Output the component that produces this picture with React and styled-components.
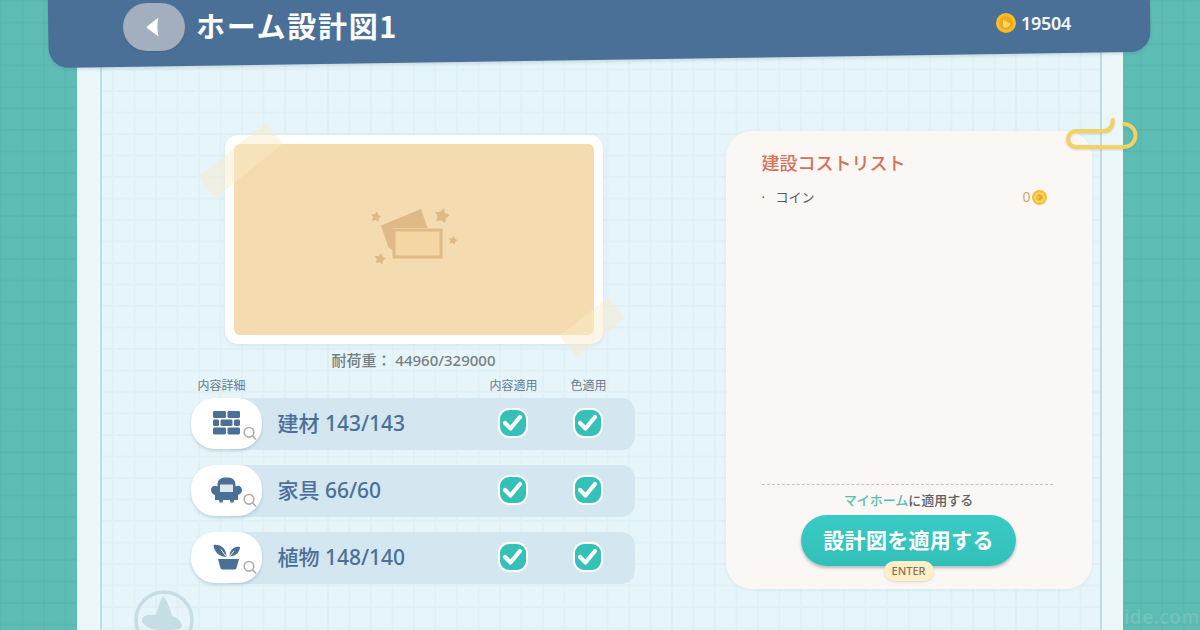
import React from "react";
import styled, { createGlobalStyle } from "styled-components";

const Global = createGlobalStyle`
  html, body { margin: 0; padding: 0; }
  body { font-family: "Noto Sans", "Noto Sans CJK JP", sans-serif; }
`;

const JP = `"Noto Sans", "Noto Sans CJK JP", sans-serif`;

const Root = styled.div`
  position: relative;
  width: 1200px;
  height: 630px;
  overflow: hidden;
  display: flex;
  flex-direction: column;
  font-family: ${JP};
  background-color: #5dbcb4;
  background-image:
    linear-gradient(to right, rgba(80, 172, 162, 0.28) 2px, transparent 2px),
    linear-gradient(to bottom, rgba(80, 172, 162, 0.28) 2px, transparent 2px);
  background-size: 21.5px 21.5px;
`;

const Header = styled.header`
  position: relative;
  z-index: 3;
  flex: none;
  display: flex;
  align-items: center;
  width: 1102px;
  height: 54px;
  margin-left: 48px;
  padding-left: 75px;
  box-sizing: border-box;
  &::before {
    content: "";
    position: absolute;
    left: 0;
    top: -40px;
    width: 100%;
    height: 100px;
    border-radius: 0 0 20px 20px;
    background: #4a7097;
    transform: rotate(-0.85deg);
    box-shadow: 0 2px 3px rgba(70, 110, 130, 0.18);
  }
`;

const BackButton = styled.button`
  position: relative;
  width: 62px;
  height: 48px;
  border: none;
  padding: 0;
  border-radius: 24px;
  background: #a3aebf;
  display: flex;
  align-items: center;
  justify-content: center;
  box-shadow: 0 1px 1px rgba(50, 80, 110, 0.35);
`;

const Title = styled.h1`
  position: relative;
  margin: -4px 0 0 11px;
  color: #fff;
  font-size: 29px;
  line-height: 1;
  font-weight: 700;
  letter-spacing: 1.7px;
  font-family: "Noto Sans CJK JP", sans-serif;
`;

const Wallet = styled.div`
  position: relative;
  margin-left: auto;
  margin-right: 79px;
  margin-top: -8px;
  display: flex;
  align-items: center;
  gap: 5px;
  color: #f3f6fa;
  font-size: 18px;
  font-weight: 600;
  letter-spacing: -0.3px;
`;

const Paper = styled.main`
  position: relative;
  flex: none;
  box-sizing: border-box;
  width: 1046px;
  height: 630px;
  margin: -54px 0 0 77px;
  padding: 0 21px 0 23px;
  background: #ecf7fa;
`;

const Sheet = styled.div`
  box-sizing: border-box;
  height: 100%;
  border-left: 2.5px solid #bcdde5;
  border-right: 2.5px solid #bcdde5;
  background-color: #e5f5fa;
  background-image:
    linear-gradient(to right, #e0f0f5 2px, transparent 2px),
    linear-gradient(to bottom, #e0f0f5 2px, transparent 2px);
  background-size: 21.5px 21.5px;
  background-position: 10px 4px;
  padding: 131px 0 0 88.5px;
  display: flex;
  align-items: flex-start;
  gap: 91px;
`;

const LeftColumn = styled.section`
  width: 444px;
  display: flex;
  flex-direction: column;
`;

const ThumbWrap = styled.div`
  position: relative;
  width: 378px;
  height: 209px;
  margin: 4px 0 0 34px;
`;

const ThumbFrame = styled.div`
  box-sizing: border-box;
  width: 100%;
  height: 100%;
  padding: 9px;
  border-radius: 13px;
  background: #fff;
  box-shadow: 0 1px 4px rgba(120, 170, 190, 0.2);
`;

const ThumbInner = styled.div`
  height: 100%;
  border-radius: 6px;
  background: #f5dcb0;
  display: flex;
  align-items: center;
  justify-content: center;
`;

const Tape = styled.div`
  position: absolute;
  left: ${(p) => p.$x}px;
  top: ${(p) => p.$y}px;
  width: ${(p) => p.$w}px;
  height: 27px;
  transform: rotate(-39deg);
  background: rgba(251, 236, 200, 0.45);
`;

const LoadText = styled.div`
  margin: 6px 0 0 34px;
  width: 378px;
  text-align: center;
  color: #777e82;
  font-size: 15px;
  line-height: 20px;
  font-weight: 500;
`;

const TableHead = styled.div`
  display: flex;
  height: 18px;
  margin-top: 6px;
  align-items: center;
  color: #68798f;
  font-size: 12px;
`;

const HeadDetail = styled.span`
  margin-left: 7px;
  width: 292px;
`;

const HeadCol = styled.span`
  width: ${(p) => p.$w}px;
`;

const Rows = styled.div`
  display: flex;
  flex-direction: column;
  gap: 15.5px;
  margin-top: 4px;
`;

const Row = styled.div`
  position: relative;
  display: flex;
  align-items: center;
  height: 51.5px;
  &::before {
    content: "";
    position: absolute;
    left: 39px;
    right: 0;
    top: 0;
    bottom: 0;
    background: #d4e6ef;
    border-radius: 0 14px 14px 0;
  }
`;

const IconPill = styled.div`
  position: relative;
  box-sizing: border-box;
  flex: none;
  width: 71px;
  height: 51px;
  border-radius: 24px;
  background: #fff;
  box-shadow: 0 2px 3px rgba(110, 140, 165, 0.3);
  display: flex;
  align-items: center;
  justify-content: center;
`;

const RowLabel = styled.span`
  position: relative;
  margin-left: 16px;
  width: 220px;
  padding-bottom: 4px;
  color: #4a7097;
  font-size: 21px;
  font-weight: 500;
  white-space: nowrap;
`;

const Check = styled.span`
  position: relative;
  box-sizing: border-box;
  flex: none;
  width: 30px;
  height: 30px;
  margin-top: -2px;
  border-radius: 11px;
  border: 2px solid #fff;
  background: #35c1b8;
  display: flex;
  align-items: center;
  justify-content: center;
  margin-left: ${(p) => p.$ml}px;
`;

const Card = styled.aside`
  box-sizing: border-box;
  width: 366px;
  height: 458px;
  border-radius: 26px;
  background: #fbf7f4;
  padding: 18px 36px 23px;
  display: flex;
  flex-direction: column;
  box-shadow: 0 1px 3px rgba(130, 170, 190, 0.15);
`;

const CardTitle = styled.h2`
  margin: 0;
  color: #d2735c;
  font-size: 18px;
  line-height: 26px;
  font-weight: 500;
  font-family: "Noto Sans CJK JP", sans-serif;
`;

const CostRow = styled.div`
  display: flex;
  align-items: center;
  margin-top: 12px;
  padding-right: 9px;
  color: #55585c;
  font-size: 13px;
  line-height: 20px;
`;

const Bullet = styled.span`
  width: 14px;
`;

const CostValue = styled.span`
  margin-left: auto;
  display: flex;
  align-items: center;
  gap: 1px;
  color: #c9a871;
  font-size: 14px;
`;

const Spacer = styled.div`
  flex: 1;
`;

const Dashed = styled.div`
  height: 0;
  border-top: 1px dashed #c6c3be;
  margin-right: 3px;
`;

const ApplyNote = styled.div`
  margin-top: 6px;
  text-align: center;
  font-size: 13px;
  line-height: 18px;
  font-weight: 500;
  color: #5d6062;
`;

const Accent = styled.span`
  color: #55bdb4;
`;

const ActionWrap = styled.div`
  position: relative;
  align-self: center;
  margin-top: 6px;
`;

const ApplyButton = styled.button`
  display: block;
  box-sizing: border-box;
  width: 215px;
  height: 51px;
  border: none;
  padding: 0 0 4px;
  border-radius: 26px;
  background: linear-gradient(#39cbc5, #33bfb9);
  color: #fff;
  font-family: "Noto Sans CJK JP", sans-serif;
  font-size: 21px;
  font-weight: 700;
  letter-spacing: 0.3px;
  box-shadow: 0 2px 3px rgba(90, 110, 120, 0.45);
`;

const EnterTag = styled.span`
  position: absolute;
  left: 50%;
  bottom: -15px;
  transform: translateX(-50%);
  box-sizing: border-box;
  width: 50px;
  height: 20px;
  border-radius: 10px;
  background: #fdf0c8;
  color: #8a6e55;
  font-size: 11px;
  line-height: 20px;
  font-weight: 500;
  text-align: center;
  box-shadow: 0 1px 2px rgba(120, 120, 110, 0.25);
`;

const Clip = styled.svg`
  position: absolute;
  left: 1060px;
  top: 115px;
  z-index: 2;
  filter: drop-shadow(0 1px 1px rgba(120, 110, 70, 0.25));
`;

const Crest = styled.svg`
  position: absolute;
  left: 132px;
  top: 588px;
`;

const Watermark = styled.span`
  position: absolute;
  right: 0;
  bottom: 0;
  color: rgba(255, 255, 255, 0.12);
  font-size: 19px;
  line-height: 26px;
  font-weight: 600;
  letter-spacing: 0.4px;
`;

const Coin = ({ size = 20 }) => (
  <svg width={size} height={size} viewBox="0 0 20 20">
    <circle cx="10" cy="10" r="10" fill="#f6bd24" />
    <circle cx="10" cy="10" r="6.8" fill="#eea71c" />
    <path d="M7 6.5 L14.2 10.6 A4.6 4.6 0 0 1 7 13.8 Z" fill="#fbd65a" />
  </svg>
);

const SmallCoin = () => (
  <svg width="15" height="15" viewBox="0 0 20 20">
    <circle cx="10" cy="10" r="10" fill="#f2bf3c" />
    <circle cx="10" cy="10" r="6" fill="none" stroke="#fbdc74" strokeWidth="1.8" />
    <path d="M9 6.5 L13 10 L9 13" fill="none" stroke="#e39b17" strokeWidth="1.6" />
  </svg>
);

const Lens = () => (
  <g fill="none" stroke="#aeaeaa" strokeWidth="1.7" strokeLinecap="round">
    <circle cx="58" cy="34.3" r="4.8" />
    <path d="M61.5 37.8 L64.6 41" />
  </g>
);

const PillSvg = ({ children }) => (
  <svg width="71" height="51" viewBox="0 0 71 51">
    {children}
    <Lens />
  </svg>
);

const Bricks = () => (
  <PillSvg>
    <g fill="#4a7097">
      <rect x="22" y="13" width="13" height="7" rx="1.4" />
      <rect x="36.500" y="13" width="12.500" height="7" rx="1.4" />
      <rect x="22" y="21.500" width="6" height="6.500" rx="1.4" />
      <rect x="29.500" y="21.500" width="12" height="6.500" rx="1.4" />
      <rect x="43" y="21.500" width="6" height="6.500" rx="1.4" />
      <rect x="22" y="29.500" width="13" height="7" rx="1.4" />
      <rect x="36.500" y="29.500" width="12.500" height="7" rx="1.4" />
    </g>
  </PillSvg>
);

const Sofa = () => (
  <PillSvg>
    <g transform="translate(-1.5 0)">
      <path
        fill="#4a7097"
        d="M28 20 C28 14 32 12.500 37 12.500 C42 12.500 46 14 46 20 L46 21.500 C49 19.500 52.500 21.500 52.500 25 C52.500 28 50 29.500 48.500 30 L48.500 35 L44.500 35 L44 37.500 L41 37.500 L40.500 35 L33.500 35 L33 37.500 L30 37.500 L29.500 35 L25.500 35 L25.500 30 C24 29.500 21.500 28 21.500 25 C21.500 21.500 25 19.500 28 21.500 Z"
      />
      <path fill="#dfe7ee" d="M30.500 19.500 H43.500 V27 H30.500 Z" />
      <path fill="#4a7097" d="M30 27 H44 V31 H30 Z" />
    </g>
  </PillSvg>
);

const Plant = () => (
  <PillSvg>
    <g fill="#4a7097">
      <path d="M22.500 13 C30 12 35.500 17 35.500 25 C28.500 25 23 20 22.500 13 Z" />
      <path d="M49 15 C43 14 38.500 18 38.500 24.500 C44 24.500 48.500 21 49 15 Z" />
      <path d="M27 27 H48 L45.500 36 C45 37.500 44 37.500 43 37.500 H32 C31 37.500 30 37.500 29.500 36 Z" />
    </g>
    <path d="M35.500 25 L30 17.500 M38.500 24.500 L43 19" stroke="#fff" strokeWidth="1" fill="none" />
  </PillSvg>
);

const Tick = () => (
  <svg width="21" height="18" viewBox="0 0 21 18">
    <path
      d="M3 9 L8.500 14.500 L18 3"
      fill="none"
      stroke="#fff"
      strokeWidth="4.200"
      strokeLinecap="round"
      strokeLinejoin="round"
    />
  </svg>
);

const star = (cx, cy, r) => {
  const pts = [];
  for (let i = 0; i < 10; i++) {
    const rad = i % 2 ? r * 0.55 : r;
    const a = (Math.PI / 5) * i - Math.PI / 2 + 0.2;
    pts.push(`${(cx + rad * Math.cos(a)).toFixed(1)},${(cy + rad * Math.sin(a)).toFixed(1)}`);
  }
  return pts.join(" ");
};

const PlaceholderSvg = styled.svg`
  overflow: visible;
`;

const Placeholder = () => (
  <PlaceholderSvg width="90" height="60" viewBox="0 0 90 60" fill="#dfba86">
    <polygon points={star(7, 7, 5.5)} />
    <polygon points={star(73, 6, 8)} />
    <polygon points={star(84, 30.5, 4.5)} />
    <polygon points={star(11, 49, 6)} />
    <path d="M12 15.500 L52 -1 L58.500 18 L24 18 L24 40 L19.500 37.500 Z" />
    <rect x="25" y="20" width="47" height="27" fill="#f3d6a3" stroke="#dfba86" strokeWidth="3" />
  </PlaceholderSvg>
);

const rows = [
  { icon: <Bricks />, label: "建材 143/143" },
  { icon: <Sofa />, label: "家具 66/60" },
  { icon: <Plant />, label: "植物 148/140" },
];

export default function App() {
  return (
    <Root>
      <Global />
      <Header>
        <BackButton aria-label="戻る">
          <svg width="20" height="22" viewBox="0 0 20 22">
            <path d="M14.500 1.500 L3 10.500 C2.500 11 2.500 11.500 3 12 L14.500 20.500 C13 15 13 7 14.500 1.500 Z" fill="#fff" />
          </svg>
        </BackButton>
        <Title>ホーム設計図1</Title>
        <Wallet>
          <Coin />
          19504
        </Wallet>
      </Header>
      <Paper>
        <Sheet>
          <LeftColumn>
            <ThumbWrap>
              <ThumbFrame>
                <ThumbInner>
                  <Placeholder />
                </ThumbInner>
              </ThumbFrame>
              <Tape $x={-28} $y={12} $w={87} />
              <Tape $x={336} $y={179} $w={62} />
            </ThumbWrap>
            <LoadText>耐荷重： 44960/329000</LoadText>
            <TableHead>
              <HeadDetail>内容詳細</HeadDetail>
              <HeadCol $w={81}>内容適用</HeadCol>
              <HeadCol $w={60}>色適用</HeadCol>
            </TableHead>
            <Rows>
              {rows.map((r) => (
                <Row key={r.label}>
                  <IconPill>{r.icon}</IconPill>
                  <RowLabel>{r.label}</RowLabel>
                  <Check $ml={0}>
                    <Tick />
                  </Check>
                  <Check $ml={45}>
                    <Tick />
                  </Check>
                </Row>
              ))}
            </Rows>
          </LeftColumn>
          <Card>
            <CardTitle>建設コストリスト</CardTitle>
            <CostRow>
              <Bullet>·</Bullet>
              コイン
              <CostValue>
                0
                <SmallCoin />
              </CostValue>
            </CostRow>
            <Spacer />
            <Dashed />
            <ApplyNote>
              <Accent>マイホーム</Accent>に適用する
            </ApplyNote>
            <ActionWrap>
              <ApplyButton>設計図を適用する</ApplyButton>
              <EnterTag>ENTER</EnterTag>
            </ActionWrap>
          </Card>
        </Sheet>
      </Paper>
      <Crest width="64" height="42" viewBox="0 0 64 42">
        <circle cx="32" cy="32" r="28" fill="none" stroke="#c5dde4" strokeWidth="3.500" />
        <path
          fill="#c5dde4"
          d="M31 8 C35 13 38 20 40 28 C46 30 50 34 50 38 C50 42 40 42 30 42 C20 42 10 38 10 32 C10 28 16 26 24 27 C26 20 28 13 31 8 Z"
        />
      </Crest>
      <Clip width="80" height="40" viewBox="1060 115 80 40">
        <path
          d="M1113 120 Q1112 131 1104 131 L1076 131 A8 8 0 0 0 1076 147 L1124 147 A11.500 11.500 0 0 0 1124 124"
          fill="none"
          stroke="#f3d264"
          strokeWidth="4"
          strokeLinecap="round"
        />
      </Clip>
      <Watermark>ide.com</Watermark>
    </Root>
  );
}
